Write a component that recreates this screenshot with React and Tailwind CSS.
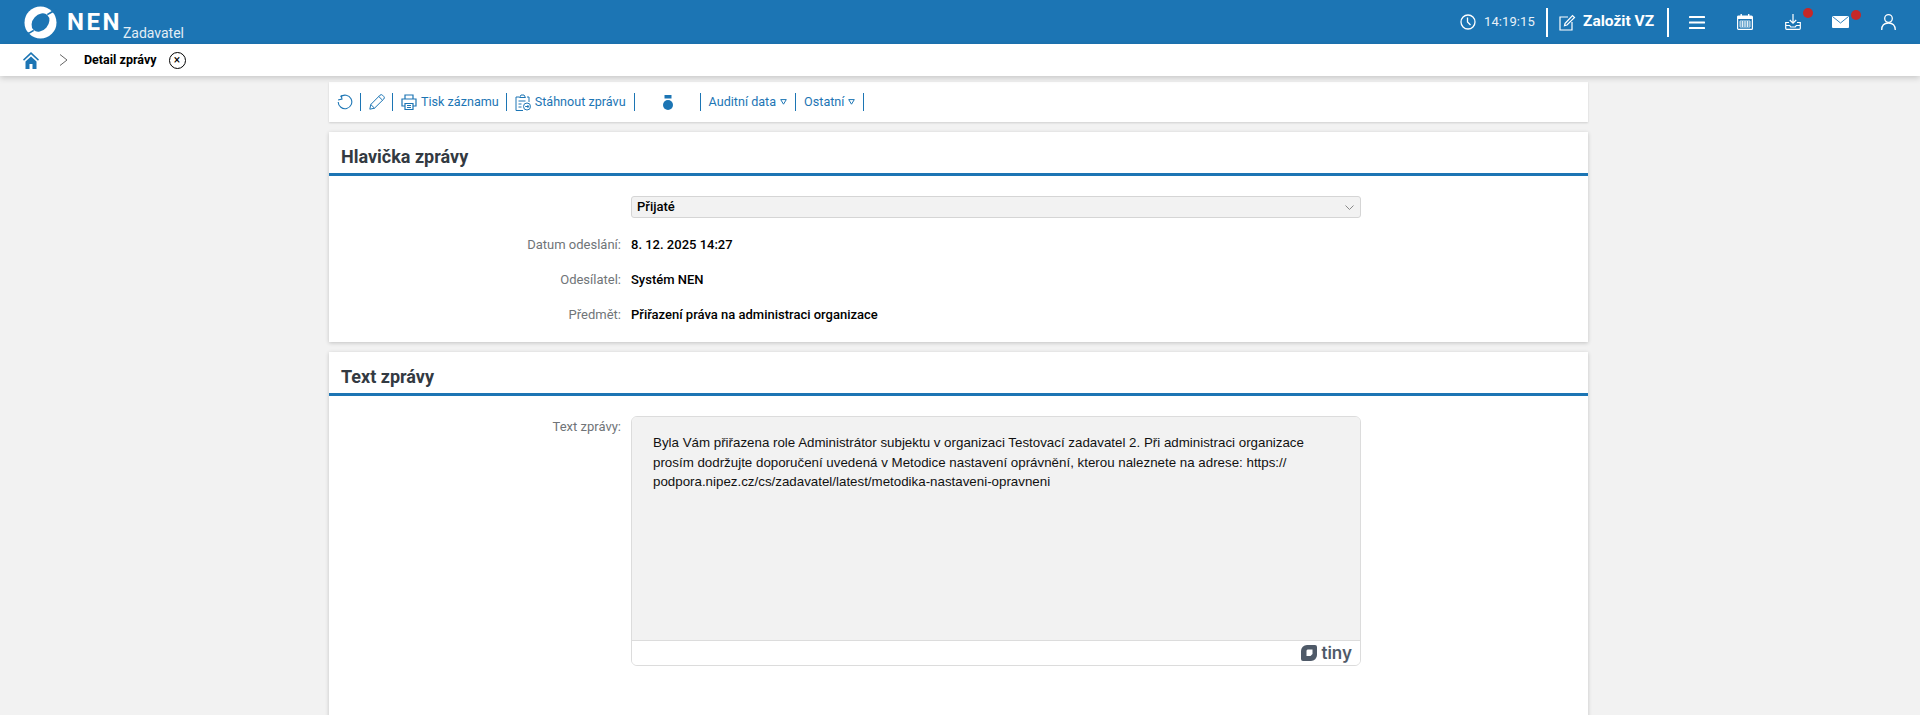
const Sep = ({ className = "" }) => <span className={`w-px h-[18px] bg-[#1c75b4] shrink-0 ${className}`} />;

const HeadSep = ({ className = "" }) => <span className={`w-[2px] h-[29px] bg-white shrink-0 ${className}`} />;

const Row = ({ label, children }) => (
  <div className="flex items-center h-[35px]">
    <div className="w-[292px] text-right text-[13px] text-[#707478]">{label}:</div>
    <div className="ml-[10px] text-[13px] font-medium text-black">{children}</div>
  </div>
);

const Dot = () => <span className="absolute top-[-6px] right-[-12px] w-[10px] h-[10px] rounded-full bg-[#c62828]" />;

const CardTitle = ({ children }) => (
  <div className="h-[44px] pl-[12px] pt-[7px] flex items-center border-b-[3px] border-[#1c75b4] text-[18px] font-bold text-[#333a42]">
    {children}
  </div>
);

const Triangle = ({ className = "" }) => (
  <svg width="7" height="6" viewBox="0 0 7 6" fill="none" stroke="#1c75b4" className={className}>
    <path d="M.7.6h5.6L3.5 5.2z" />
  </svg>
);

const App = () => {
  return (
    <div className="h-[715px] overflow-hidden bg-[#f2f2f2] font-['Roboto',sans-serif]">
      <header className="h-[44px] bg-[#1c75b4] flex items-center text-white">
        <div className="flex items-center pl-[24px]">
          <svg width="33" height="33" viewBox="0 0 34 34">
            <circle cx="17" cy="17" r="16.500" fill="#fff" />
            <ellipse cx="17" cy="17" rx="8" ry="10.500" transform="rotate(42 17 17)" fill="#1c75b4" />
            <path d="M24 9C28 6 31 5 34 4.500M10 25C6 28 3 29 0 29.500" fill="none" stroke="#1c75b4" strokeWidth="1.600" />
          </svg>
          <span className="ml-[10px] text-[24px] leading-none font-bold tracking-[2.5px]">NEN</span>
          <span className="ml-[1px] pt-[22px] text-[14px] leading-none text-[#e3eef6]">Zadavatel</span>
        </div>
        <div className="ml-auto mr-[24px] flex items-center h-full">
          <svg width="16" height="16" viewBox="0 0 16 16" fill="none" stroke="#fff" strokeWidth="1.3">
            <circle cx="8" cy="8" r="7" />
            <path d="M7.5 3.5V8l3 3" />
          </svg>
          <span className="ml-[8px] w-[49px] text-[13px] tracking-[0.1px] text-[#e8f1f8]">14:19:15</span>
          <HeadSep className="ml-[13px]" />
          <svg width="17" height="17" viewBox="0 0 17 17" fill="none" stroke="#fff" strokeWidth="1.2" className="ml-[11px]">
            <path d="M9 3H1v13h12V8" />
            <path d="M6 9.5 13.5 1.5l2 2L8 11l-2.5.7z" />
          </svg>
          <span className="ml-[7px] w-[72px] text-[15.5px] font-bold whitespace-nowrap">Založit VZ</span>
          <HeadSep className="ml-[12px]" />
          <svg width="16" height="13" viewBox="0 0 16 13" fill="#fff" className="ml-[20px]">
            <rect width="16" height="2" rx=".5" />
            <rect y="5.5" width="16" height="2" rx=".5" />
            <rect y="11" width="16" height="2" rx=".5" />
          </svg>
          <svg width="16" height="16" viewBox="0 0 16 16" className="ml-[32px]">
            <rect x="0.6" y="2" width="14.8" height="13.4" rx="1" fill="none" stroke="#fff" strokeWidth="1.2" />
            <rect x="1" y="2" width="14" height="3" fill="#fff" />
            <rect x="3.5" y="0" width="1.4" height="3" fill="#fff" />
            <rect x="11" y="0" width="1.4" height="3" fill="#fff" />
            <path d="M3 7h10v6H3zM3 9h10M3 11h10M5.5 7v6M8 7v6M10.5 7v6" fill="none" stroke="#fff" strokeWidth=".8" />
          </svg>
          <span className="relative ml-[32px]">
            <svg width="16" height="16" viewBox="0 0 16 16" fill="none" stroke="#fff" strokeWidth="1.2" className="block">
              <path d="M8 0v9M4.800 6 8 9.200 11.200 6" />
              <path d="M4 8.500H.7v5.800a1 1 0 0 0 1 1h12.600a1 1 0 0 0 1-1V8.500H12M.7 11.500h4l1 1.500h4.600l1-1.500h4" />
            </svg>
            <Dot />
          </span>
          <span className="relative ml-[31px]">
            <svg width="17" height="12" viewBox="0 0 17 12" className="block">
              <rect width="17" height="12" rx="1" fill="#fff" />
              <path d="M.5.5 8.500 7 16.500.5" fill="none" stroke="#1c75b4" strokeWidth=".9" />
            </svg>
            <Dot />
          </span>
          <svg width="15" height="16" viewBox="0 0 15 16" fill="none" stroke="#fff" strokeWidth="1.3" className="ml-[32px]">
            <circle cx="7.500" cy="4.500" r="3.800" />
            <path d="M.7 16c0-4.500 2.500-7 6.800-7s6.800 2.500 6.800 7" />
          </svg>
        </div>
      </header>

      <nav className="h-[32px] bg-white flex items-center pl-[23px] shadow-[0_2px_6px_rgba(0,0,0,0.18)] relative">
        <svg width="16" height="17" viewBox="0 0 16 17" fill="#1c75b4">
          <path d="M8 0 0 7.500l1 1.200 7-6.500 7 6.500 1-1.200zM2.500 9.500V17h4v-5h3v5h4V9.500L8 4.500z" />
        </svg>
        <svg width="9" height="12" viewBox="0 0 9 12" fill="none" stroke="#666" strokeWidth="1" className="ml-[20px]">
          <path d="M1 .5 8 6l-7 5.500" />
        </svg>
        <span className="ml-[16px] text-[12.500px] font-bold text-black">Detail zprávy</span>
        <span className="ml-[12px] w-[17px] h-[17px] rounded-full border border-black flex items-center justify-center text-[12px] leading-none">×</span>
      </nav>

      <main className="w-[1259px] ml-[329px] pt-[6px] flex flex-col gap-[10px]">
        <div className="h-[40px] bg-white shadow-[0_1px_2px_rgba(0,0,0,0.15)] flex items-center pl-[8px] text-[12.600px] text-[#1c75b4]">
          <svg width="16" height="16" viewBox="0 0 16 16" fill="none" stroke="#1c75b4" strokeWidth="1.100">
            <path d="M3.500 2.800A6.800 6.800 0 1 1 1.200 8" />
            <path d="M.7 5.500h4V1.500" transform="rotate(-12 3 4)" />
          </svg>
          <Sep className="ml-[7px]" />
          <svg width="16" height="16" viewBox="0 0 16 16" fill="none" stroke="#1c75b4" strokeWidth="1" className="ml-[8px]">
            <path d="M.8 15.200l1-4.700L11 1.200a1.800 1.800 0 0 1 2.500 0l1.300 1.300a1.800 1.800 0 0 1 0 2.500L5.500 14.200zM1.800 10.500l3.700 3.700M9.800 2.500l3.700 3.700" />
          </svg>
          <Sep className="ml-[7px]" />
          <svg width="16" height="16" viewBox="0 0 16 16" fill="none" stroke="#1c75b4" strokeWidth="1.200" className="ml-[8px]">
            <path d="M4 5V1h8v4M4 12H1V5h14v7h-3M4 9.500h8v6H4zM6 11.500h4M6 13.500h4" />
          </svg>
          <span className="ml-[4px]">Tisk záznamu</span>
          <Sep className="ml-[7px]" />
          <svg width="16" height="17" viewBox="0 0 16 17" fill="none" stroke="#1c75b4" strokeWidth="1" className="ml-[8px]">
            <path d="M4 3H1v13.500h7M12 3h2v5M4.500 3.500 6 1h3l1.500 2.500zM3.500 7h7M3.500 10h3M3.500 13h3" />
            <circle cx="12" cy="12.500" r="3.500" />
            <path d="M10.200 12.500h3.500M12.500 11l1.300 1.500-1.300 1.500" />
          </svg>
          <span className="ml-[4px]">Stáhnout zprávu</span>
          <Sep className="ml-[8px]" />
          <svg width="10" height="15" viewBox="0 0 10 15" fill="#1c75b4" className="ml-[28px]">
            <rect x="1.500" y="0" width="7" height="3.500" />
            <circle cx="5" cy="10" r="5" />
          </svg>
          <Sep className="ml-[27px]" />
          <span className="ml-[8px]">Auditní data</span>
          <Triangle className="ml-[4px]" />
          <Sep className="ml-[8px]" />
          <span className="ml-[8px]">Ostatní</span>
          <Triangle className="ml-[4px]" />
          <Sep className="ml-[8px]" />
        </div>

        <section className="h-[210px] bg-white shadow-[0_1px_4px_rgba(0,0,0,0.2)]">
          <CardTitle>Hlavička zprávy</CardTitle>
          <div className="ml-[302px] mt-[20px] w-[730px] h-[22px] bg-[#f2f2f2] border border-[#d5d5d5] rounded-[3px] flex items-center justify-between pl-[5px] pr-[6px] text-[13px] font-medium text-black">
            Přijaté
            <svg width="9" height="5" viewBox="0 0 9 5" fill="none" stroke="#888">
              <path d="M.5.500 4.500 4.500 8.500.500" />
            </svg>
          </div>
          <div className="mt-[9px]">
            <Row label="Datum odeslání">8. 12. 2025 14:27</Row>
            <Row label="Odesílatel">Systém NEN</Row>
            <Row label="Předmět">Přiřazení práva na administraci organizace</Row>
          </div>
        </section>

        <section className="h-[400px] bg-white shadow-[0_1px_4px_rgba(0,0,0,0.2)]">
          <CardTitle>Text zprávy</CardTitle>
          <div className="flex mt-[20px]">
            <div className="w-[292px] text-right text-[13px] text-[#707478] pt-[1px]">Text zprávy:</div>
            <div className="ml-[10px] w-[730px] h-[250px] border border-[#dcdcdc] rounded-[6px] overflow-hidden flex flex-col">
              <div className="flex-1 bg-[#f2f2f2] pt-[16px] pl-[21px] pr-[20px] font-['Liberation_Sans',sans-serif] text-[13.330px] leading-[19.5px] text-[#111111]">
                Byla Vám přiřazena role Administrátor subjektu v organizaci Testovací zadavatel 2. Při administraci organizace
                <br />
                prosím dodržujte doporučení uvedená v Metodice nastavení oprávnění, kterou naleznete na adrese: https://
                <br />
                podpora.nipez.cz/cs/zadavatel/latest/metodika-nastaveni-opravneni
              </div>
              <div className="h-[25px] bg-white border-t border-[#dcdcdc] flex items-center justify-end pr-[8px] gap-[4px] text-[#4f5a68]">
                <svg width="16" height="16" viewBox="0 0 16 16" fill="#4f5a68">
                  <path fillRule="evenodd" d="M6 0h8a2 2 0 0 1 2 2v8a6 6 0 0 1-6 6H2a2 2 0 0 1-2-2V6a6 6 0 0 1 6-6zm-.500 5.500v5.500h4l2-2V4.500h-5z" />
                </svg>
                <span className="text-[17px] font-semibold leading-none font-['Inter',sans-serif]">tiny</span>
              </div>
            </div>
          </div>
        </section>
      </main>
    </div>
  );
};

export default App;
